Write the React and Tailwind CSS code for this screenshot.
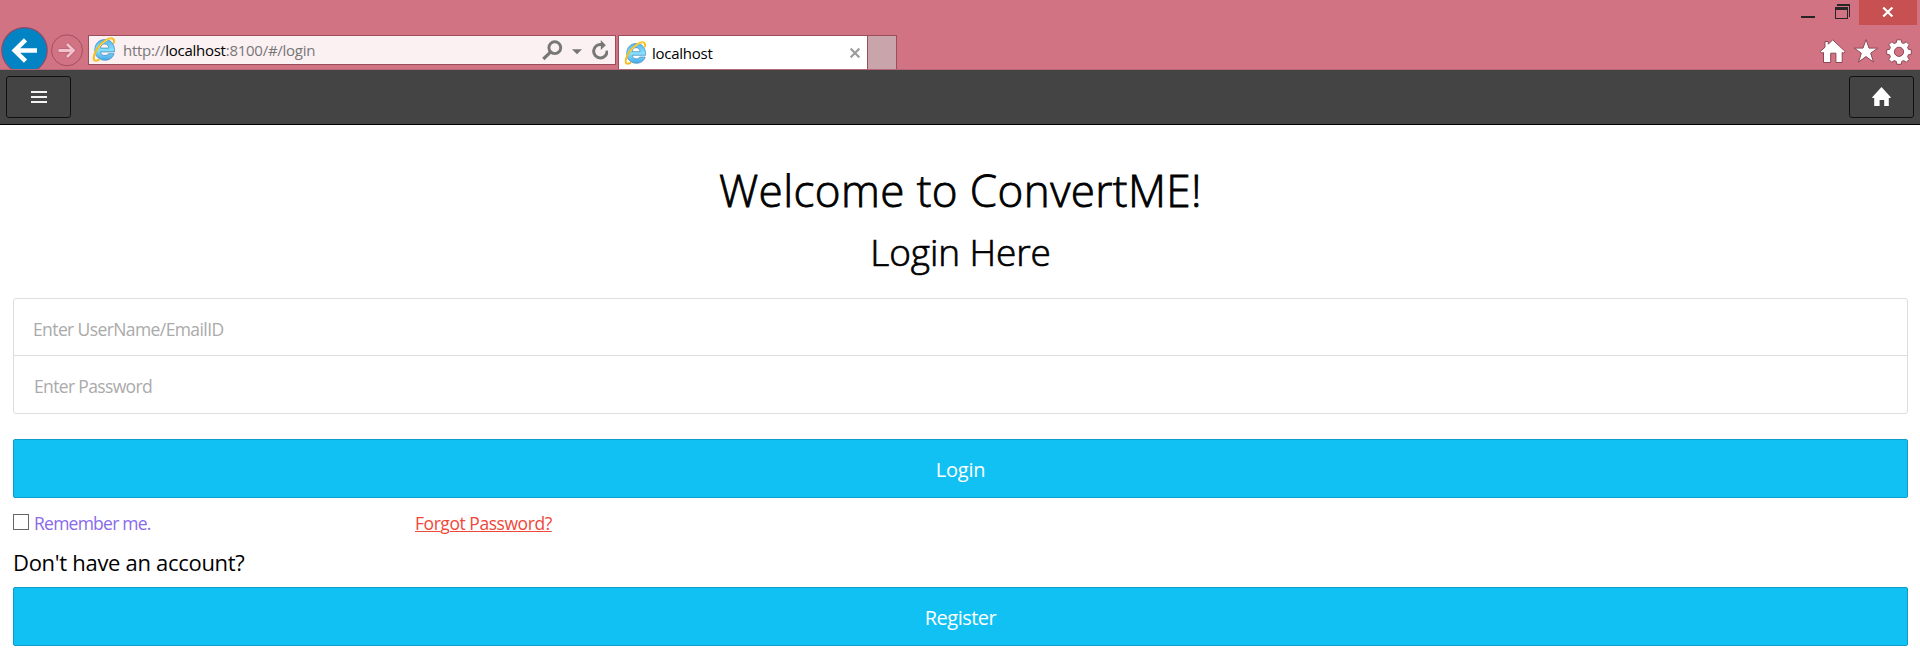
function BrowserLogo({ className, id }) {
  return (
    <svg className={className} viewBox="0 0 24 25" fill="none">
      <defs>
        <linearGradient id={id} x1="0" y1="0" x2="0" y2="1">
          <stop offset="0" stopColor="#58b4ea" />
          <stop offset="0.5" stopColor="#86e2fc" />
          <stop offset="1" stopColor="#48a8e6" />
        </linearGradient>
      </defs>
      <path
        d="M12.600 2.600C6.800 2.600 2.800 7 2.800 12.800c0 6 4.200 10.400 10 10.400 4.500 0 8-2.300 9.300-6.500h-5.700c-.7 1.200-1.900 1.900-3.500 1.900-2.500 0-4.100-1.400-4.200-3.700h13.800c.5-7.500-3.400-12.300-9.900-12.300zM8.500 11.100c.4-2.600 1.900-4.200 4.200-4.200 2.300 0 3.900 1.600 4.100 4.200z"
        fill={`url(#${id})`}
        stroke="#3a86bd"
        strokeWidth="0.7"
      />
      <path
        d="M21.800 5.800c.6-2.400.1-4.100-1.700-4.400C16.500.8 10.300 4.900 6 10.800 2.300 16 .7 21.600 2.400 23.300c.9.8 2.400.5 4.200-.5"
        stroke="#f7bd1c"
        strokeWidth="2"
        strokeLinecap="round"
      />
      <path d="M20 1.900C16.500 1.500 10.700 5.400 6.600 11" stroke="#ffe27a" strokeWidth="0.8" />
    </svg>
  );
}

function WindowControls() {
  return (
    <div className="flex h-[25px] justify-end pr-[3px]">
      <svg className="mt-[4px] mr-[9px] h-[16px] w-[50px]" viewBox="0 0 50 16" shapeRendering="crispEdges">
        <rect x="1" y="12" width="14" height="2" fill="#262626" />
        <path d="M37 0h13v13h-1V2H37z" fill="#262626" />
        <path d="M35 3h13v12H35zM36 6v8h11V6z" fill="#262626" fillRule="evenodd" />
      </svg>
      <div className="flex h-[25px] w-[58px] justify-center bg-[#c75050]">
        <svg className="mt-[7px] mr-[1px] h-[10px] w-[12px]" viewBox="0 0 12 10" stroke="#fff" strokeWidth="2.200">
          <path d="M1.200.5l9.200 9M10.400.5l-9.200 9" />
        </svg>
      </div>
    </div>
  );
}

function BackButton() {
  return (
    <svg className="mt-[2px] h-[42px] w-[48px] shrink-0" viewBox="0 0 48 42">
      <circle cx="24.500" cy="23.300" r="22.700" fill="#0284c4" stroke="#8a4a68" strokeWidth="1.100" />
      <path d="M37 23.500H14.500M25.500 12.800L14.700 23.500l10.800 10.700" fill="none" stroke="#fff" strokeWidth="4.500" />
    </svg>
  );
}

function ForwardButton() {
  return (
    <svg className="mt-[8px] ml-[2px] h-[34px] w-[34px] shrink-0" viewBox="0 0 34 34">
      <circle cx="17" cy="17.300" r="15.500" fill="none" stroke="#a0505f" strokeWidth="1" />
      <path d="M8 17.500h15M16.800 10.700l6.700 6.800-6.700 6.800" fill="none" stroke="#b05c6e" strokeWidth="4.200" />
      <path d="M8.500 17.500H23M17 11l6.500 6.500L17 24" fill="none" stroke="#f2c1cb" strokeWidth="2.800" />
    </svg>
  );
}

function AddressBar() {
  return (
    <div className="mt-[10px] ml-[4px] flex h-[30px] w-[528px] shrink-0 border border-[#9a4e5c] bg-[#fbf0f2]">
      <BrowserLogo id="logo-address" className="mt-[1px] ml-[3px] h-[25px] w-[24px] shrink-0" />
      <p className="mt-[3px] ml-[7px] grow text-[15px] leading-[22px] tracking-[-0.26px] whitespace-nowrap text-[#777]">
        http://<span className="text-black">localhost</span>:8100/#/login
      </p>
      <svg className="mt-[4px] mr-[7px] h-[21px] w-[67px] shrink-0" viewBox="0 0 67 21" fill="none">
        <circle cx="13.800" cy="7.700" r="5.900" stroke="#777" strokeWidth="2.900" />
        <path d="M9.500 12.200L2.300 19" stroke="#777" strokeWidth="3.200" />
        <path d="M31 9.300h10l-5 5z" fill="#777" />
        <path d="M60.500 4.600A6.700 6.700 0 1 0 66 10.500" stroke="#777" strokeWidth="3" />
        <path d="M59.800 0l5 5.300-5 4.800z" fill="#777" />
      </svg>
    </div>
  );
}

function BrowserTabs() {
  return (
    <>
      <div className="mt-[10px] ml-[2px] flex h-[34px] w-[250px] shrink-0 border border-b-0 border-[#9a4e5c] bg-white">
        <BrowserLogo id="logo-tab" className="mt-[5px] ml-[5px] h-[24px] w-[23px] shrink-0" />
        <p className="mt-[6px] ml-[5px] grow text-[15px] leading-[22px] tracking-[-0.25px] text-black">localhost</p>
        <svg className="mt-[12px] mr-[7px] h-[10px] w-[10px]" viewBox="0 0 10 10" stroke="#9c9c9c" strokeWidth="2.200">
          <path d="M.6.6l8.800 8.800M9.400.6L.6 9.400" />
        </svg>
      </div>
      <div className="mt-[10px] h-[34px] w-[29px] shrink-0 border border-b-0 border-l-0 border-[#9a4e5c] bg-[#c9a4ab]" />
    </>
  );
}

function BrowserTools() {
  return (
    <svg
      className="mt-[12px] ml-auto mr-[7px] h-[28px] w-[94px] shrink-0"
      viewBox="0 0 94 28"
      fill="#fff"
      stroke="#8e4655"
      strokeWidth="1"
    >
      <path d="M1.200 14.500L6 10.200V4.500h3.300v2.700L13.700 2.800l12.500 11.700-1.300 1.600-1.700-.6V25.500h-6.300v-9.300h-5.200v9.300H4.500V15.500l-1.900.6z" />
      <path d="M47 2.500l3 8.600h8.800l-7.100 5.100 2.800 8.900-7.500-5.500-7.500 5.500 2.800-8.900-7.100-5.100H44z" />
      <path
        fillRule="evenodd"
        d="M77.800 2.800h4.400l.6 2.900 1.900.8 2.600-1.700 3 3-1.700 2.600.8 1.900 2.900.5v4.500l-2.900.5-.8 1.900 1.700 2.600-3 3-2.600-1.700-1.900.8-.6 2.900h-4.400l-.6-2.900-1.900-.8-2.600 1.700-3-3 1.700-2.600-.8-1.900-2.900-.5v-4.500l2.900-.5.8-1.900-1.700-2.600 3-3 2.600 1.700 1.900-.8zM80 10.200a4.600 4.600 0 1 0 0 9.200 4.600 4.600 0 1 0 0-9.200z"
      />
    </svg>
  );
}

function AppBar() {
  return (
    <header className="flex h-[55px] items-start justify-between border-b border-black bg-[#444] px-[6px] pt-[6px]">
      <button className="flex h-[42px] w-[65px] justify-center rounded-[3px] border border-[#111]">
        <svg className="mt-[14px] h-[12px] w-[16px]" viewBox="0 0 16 12" fill="#f2f2f2">
          <path d="M0 0h16v2H0zM0 5h16v2H0zM0 10h16v2H0z" />
        </svg>
      </button>
      <button className="flex h-[42px] w-[65px] justify-center rounded-[3px] border border-[#111]">
        <svg className="mt-[10px] h-[19px] w-[19px]" viewBox="0 0 19 19" fill="#fff">
          <path d="M9.500 0L19 10.500l-.7.500h-1.500v8h-4.600v-6H7.600v6H2.200v-8H.7L0 10.500z" />
        </svg>
      </button>
    </header>
  );
}

export default function App() {
  return (
    <div className="h-[661px] overflow-hidden bg-white font-['Open_Sans','Noto_Sans',sans-serif] text-black">
      <div className="h-[70px] border-b border-[#b56676] bg-[#d27383]">
        <WindowControls />
        <div className="flex h-[44px] items-start overflow-hidden">
          <BackButton />
          <ForwardButton />
          <AddressBar />
          <BrowserTabs />
          <BrowserTools />
        </div>
      </div>
      <AppBar />
      <main className="flex flex-col pr-[12px] pl-[13px] pt-[38px]">
        <h1 className="text-center text-[44px] leading-[54px] font-light tracking-[0.4px] [-webkit-text-stroke:0.8px_black]">
          Welcome to ConvertME!
        </h1>
        <h2 className="mt-[12px] text-center text-[37px] leading-[46px] font-light tracking-[-0.1px] [-webkit-text-stroke:0.7px_black]">
          Login Here
        </h2>

        <div className="mt-[23px] h-[116px] rounded-[3px] border border-[#ddd] text-[17.5px] text-[#aaa]">
          <div className="h-[57px] border-b border-[#ddd] pt-[4px] pl-[19px] leading-[52px] tracking-[-0.6px]">
            Enter UserName/EmailID
          </div>
          <div className="pt-[4px] pl-[20px] leading-[52px] tracking-[-0.65px]">Enter Password</div>
        </div>

        <button className="mt-[25px] h-[59px] rounded-[2px] border border-[#0f9dc8] bg-[#11c1f3] pt-[2px] text-[20px] tracking-[-0.2px] text-white">
          Login
        </button>

        <div className="mt-[12px] flex h-[26px] items-start text-[17.5px] leading-[26px]">
          <span className="mt-[4px] h-[16px] w-[16px] border border-[#666] bg-white" />
          <span className="ml-[5px] w-[381px] tracking-[-0.75px] text-[#886aea]">Remember me.</span>
          <a className="tracking-[-0.45px] text-[#ef473a] underline decoration-1 underline-offset-[1px]">Forgot Password?</a>
        </div>

        <p className="mt-[10px] h-[32px] text-[22px] leading-[32px] tracking-[-0.3px]">Don't have an account?</p>

        <button className="mt-[9px] h-[59px] rounded-[2px] border border-[#0f9dc8] bg-[#11c1f3] pt-[2px] text-[20px] tracking-[-0.5px] text-white">
          Register
        </button>
      </main>
    </div>
  );
}
